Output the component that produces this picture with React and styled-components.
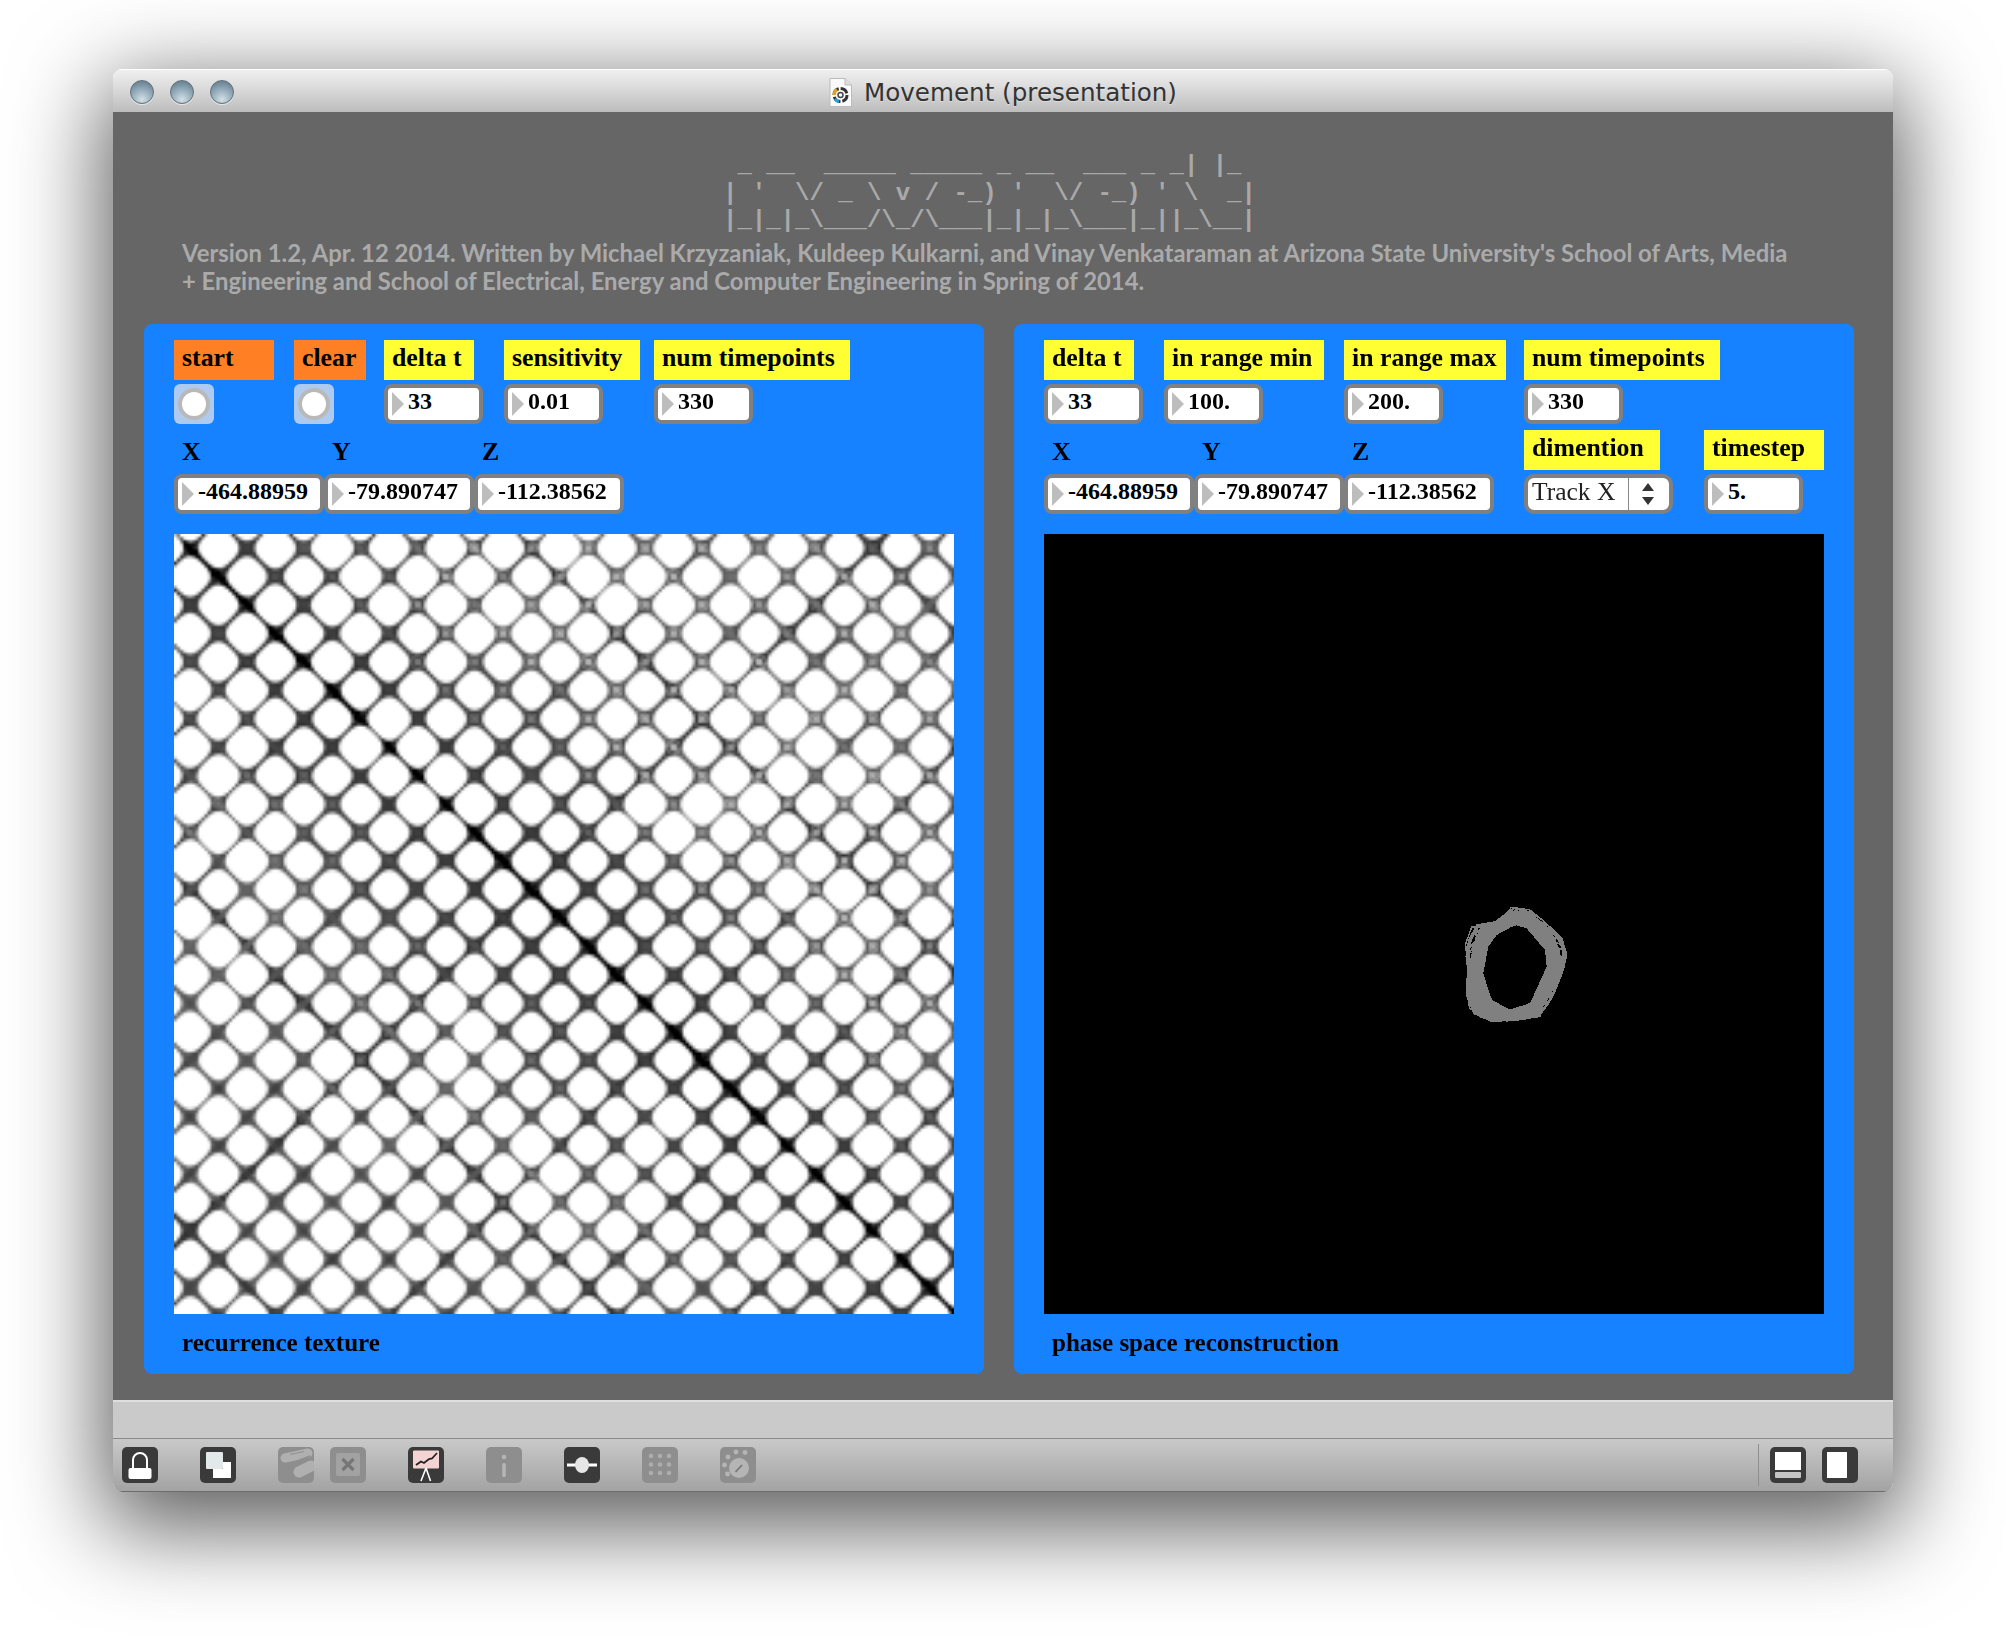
import React, { useEffect, useRef } from 'react';
import styled, { createGlobalStyle } from 'styled-components';

const GlobalStyle = createGlobalStyle`
  html, body { margin: 0; padding: 0; background: #fff; }
  body { overflow: hidden; }
`;

const Desktop = styled.div`
  width: 2006px;
  height: 1650px;
  padding: 69px 113px 0;
  box-sizing: border-box;
`;

const Window = styled.div`
  width: 1780px;
  height: 1423px;
  display: flex;
  flex-direction: column;
  border-radius: 9px;
  overflow: hidden;
`;

const WindowShadow = styled.div`
  width: 1780px;
  height: 1423px;
  border-radius: 9px;
  box-shadow: 0 26px 90px 10px rgba(0, 0, 0, 0.64);
`;

const TitleBar = styled.div`
  position: relative;
  height: 43px;
  flex: none;
  display: flex;
  align-items: center;
  justify-content: center;
  gap: 12px;
  padding-top: 3px;
  box-sizing: border-box;
  background: linear-gradient(#f0f0f0, #e2e2e2 30%, #bdbdbd);
  box-shadow: inset 0 1px 0 #fff;
`;

const Lights = styled.div`
  position: absolute;
  left: 17px;
  top: 11px;
  display: flex;
  gap: 16px;
`;

const Light = styled.span`
  width: 24px;
  height: 24px;
  border-radius: 50%;
  box-sizing: border-box;
  border: 1px solid #5f6f7a;
  background: radial-gradient(circle at 50% 85%, #d3e0e6 0, #97afbd 45%, #6f8797 80%);
  box-shadow: 0 1px 0 rgba(255, 255, 255, 0.6);
`;

const TitleText = styled.span`
  font-family: "DejaVu Sans", sans-serif;
  font-size: 24.6px;
  color: #333;
  text-shadow: 0 1px 0 rgba(255, 255, 255, 0.4);
`;

const Body = styled.div`
  flex: none;
  height: 1288px;
  box-sizing: border-box;
  background: #666;
  padding: 40px 39px 0 31px;
`;

const AsciiLogo = styled.pre`
  margin: 0 0 0 579px;
  height: 87px;
  font-family: "Liberation Mono", monospace;
  font-weight: 700;
  font-size: 24px;
  line-height: 27.5px;
  color: #a9a9a9;
`;

const Blurb = styled.p`
  margin: 0 0 0 38px;
  font-family: Lato, sans-serif;
  font-weight: 700;
  font-size: 23.85px;
  line-height: 28px;
  color: #aaa;
  white-space: nowrap;
`;

const Panels = styled.div`
  display: flex;
  gap: 30px;
  margin-top: 29px;
`;

const Panel = styled.section`
  width: 840px;
  height: 1050px;
  box-sizing: border-box;
  padding: 16px 30px 0;
  border-radius: 8px;
  background: #1782ff;
`;

const Row = styled.div`
  display: flex;
  height: 84px;
  margin-bottom: 6px;
`;

const Field = styled.div`
  width: ${(p) => p.$w}px;
  flex: none;
  display: flex;
  flex-direction: column;
  gap: 4px;
`;

const Label = styled.div`
  align-self: flex-start;
  box-sizing: border-box;
  width: ${(p) => (p.$w ? `${p.$w}px` : 'auto')};
  height: 40px;
  padding-left: 8px;
  line-height: ${(p) => (p.$bg ? 36 : 43)}px;
  font-family: "Liberation Serif", serif;
  font-weight: 700;
  font-size: 25.8px;
  white-space: nowrap;
  color: #000;
  background: ${(p) => p.$bg || 'transparent'};
`;

const Bang = styled.div`
  width: 40px;
  height: 40px;
  box-sizing: border-box;
  padding: 4px;
  border-radius: 6px;
  background: #afcaef;
`;

const BangRing = styled.div`
  height: 32px;
  box-sizing: border-box;
  border-radius: 50%;
  border: 4px solid #b9b9b9;
  background: #fff;
`;

const NumBox = styled.div`
  position: relative;
  width: ${(p) => p.$w}px;
  height: 40px;
  box-sizing: border-box;
  border: 4px solid #808080;
  border-radius: 8px;
  background: #fff;
  padding-left: 20px;
  font-family: "Liberation Serif", serif;
  font-weight: 700;
  font-size: 24px;
  line-height: 27px;
  color: #000;
  &::before {
    content: '';
    position: absolute;
    left: 4px;
    top: 4px;
    border-left: 12px solid #bdbdbd;
    border-top: 12px solid transparent;
    border-bottom: 12px solid transparent;
  }
`;

const SelectBox = styled.div`
  position: relative;
  width: 149px;
  height: 40px;
  box-sizing: border-box;
  border: 4px solid #808080;
  border-radius: 10px;
  background: #fff;
  padding-left: 4px;
  font-family: "Liberation Serif", serif;
  font-size: 25.5px;
  line-height: 27px;
  color: #222;
`;

const SelectArrows = styled.svg`
  position: absolute;
  right: 0;
  top: 0;
  width: 41px;
  height: 32px;
`;

const Picture = styled.canvas`
  display: block;
  width: 780px;
  height: 780px;
  margin-top: 20px;
`;

const Scope = styled.svg`
  display: block;
  width: 780px;
  height: 780px;
  margin-top: 20px;
  background: #000;
`;

const Caption = styled(Label)`
  margin-top: 8px;
  font-size: 25px;
  line-height: 41px;
`;

const StatusBar = styled.div`
  flex: none;
  height: 39px;
  box-sizing: border-box;
  background: #cacaca;
  border-top: 2px solid #dedede;
  border-bottom: 1px solid #8a8a8a;
`;

const ToolBar = styled.div`
  flex: none;
  height: 53px;
  box-sizing: border-box;
  padding: 8px 35px 0 9px;
  display: flex;
  justify-content: space-between;
  background: linear-gradient(#c9c9c9, #a3a3a3);
  border-bottom: 1px solid #6d6d6d;
`;

const ToolGroup = styled.div`
  display: flex;
  gap: ${(p) => p.$gap}px;
`;

const ToolSep = styled.div`
  width: 1px;
  height: 42px;
  margin: -3px -5px 0 0;
  background: #8f8f8f;
`;

const ToolIcon = styled.svg`
  width: 36px;
  height: 36px;
  flex: none;
  border-radius: 5px;
  background: ${(p) => (p.$off ? '#8e8e8e' : '#3a3a3a')};
`;

const ART = String.raw` _ __  _____ _____ _ __  ___ _ _| |_ 
| '  \/ _ \ v / -_) '  \/ -_) ' \  _|
|_|_|_\___/\_/\___|_|_|_\___|_||_\__|`;

const hash = (a, b) => Math.abs(Math.sin(a * 12.9898 + b * 78.233) * 43758.5453) % 1;
const smooth = (lo, hi, x) => {
  const t = Math.min(1, Math.max(0, (x - lo) / (hi - lo)));
  return t * t * (3 - 2 * t);
};

// recurrence plot: round white cells in a diagonal lattice, the main diagonal darkest
function paintTexture(canvas) {
  const n = 256;
  const P = 56.9;
  canvas.width = n;
  canvas.height = n;
  const ctx = canvas.getContext('2d');
  const img = ctx.createImageData(n, n);
  for (let py = 0; py < n; py++) {
    for (let px = 0; px < n; px++) {
      const x = ((px + 0.5) * 780) / n;
      const y = ((py + 0.5) * 780) / n;
      const u = (x - y - 2) / P;
      const v = (x + y - 30) / P;
      const U = u - Math.floor(u) - 0.5;
      const V = v - Math.floor(v) - 0.5;
      const aU = Math.abs(U);
      const aV = Math.abs(V);
      const r = Math.pow(Math.pow(aU, 3) + Math.pow(aV, 3), 1 / 3);
      const i = Math.abs(Math.round(u));
      const j = Math.round(v);
      // every cell gets its own size, kept symmetric around the main diagonal
      const cell = hash(Math.abs(Math.floor(u) + 0.5), Math.floor(v));
      const R = 0.385 + 0.05 * cell;
      const edgeKey = aU > aV ? hash(i, 3.1) : hash(j, 7.7);
      const far = Math.min(1, i / 5);
      let edge = 0.82 - 0.22 * edgeKey * far;
      if (aU > aV && i === 0) edge = 1;
      const nodeKey = hash(i, j);
      const pale = far * (0.45 + 0.35 * Math.sin((x - y + 200) / 300));
      const node = i === 0 ? 1 : Math.max(0.3, 0.82 - pale * (0.35 + 0.6 * nodeKey));
      const dark = smooth(R, R + 0.1, r) * (edge + (node - edge) * smooth(0.5, 0.6, r));
      const c = Math.round(255 * (1 - dark));
      const k = (py * n + px) * 4;
      img.data[k] = c;
      img.data[k + 1] = c;
      img.data[k + 2] = c;
      img.data[k + 3] = 255;
    }
  }
  ctx.putImageData(img, 0, 0);
}

function RecurrenceTexture() {
  const ref = useRef(null);
  useEffect(() => {
    paintTexture(ref.current);
  }, []);
  return <Picture ref={ref} />;
}

// loop outline read off the screenshot (3x crop coords), moved into the scope's own space
const toScope = ([x, y]) => [x / 3 + 386, y / 3 + 356];
const OUTER = [[255, 38], [335, 70], [345, 95], [390, 120], [418, 180], [400, 260], [370, 330], [330, 385], [250, 395], [150, 400], [105, 345], [110, 220], [95, 185], [125, 100], [200, 90]].map(toScope);
const INNER = [[255, 105], [290, 115], [345, 180], [350, 230], [300, 340], [240, 358], [185, 330], [160, 250], [175, 170], [200, 135]].map(toScope);
const CENTER = toScope([255, 230]);

// radial reach of a polygon in a given direction from the hole's centre
function reach(poly, angle) {
  const dx = Math.cos(angle);
  const dy = Math.sin(angle);
  let best = 0;
  poly.forEach((a, i) => {
    const b = poly[(i + 1) % poly.length];
    const ax = a[0] - CENTER[0];
    const ay = a[1] - CENTER[1];
    const ex = b[0] - a[0];
    const ey = b[1] - a[1];
    const det = dx * ey - dy * ex;
    if (Math.abs(det) < 1e-6) return;
    const t = (ax * ey - ay * ex) / det;
    const s = (ax * dy - ay * dx) / det;
    if (t > 0 && s >= 0 && s <= 1) best = t;
  });
  return best;
}

const TRACES = [];
for (let k = 0; k < 40; k++) {
  const steps = 20;
  const start = hash(k, 1.3) * 6.28;
  const p = [];
  for (let s = 0; s < steps; s++) {
    const ang = start + (s * 6.283) / steps;
    const lo = reach(INNER, ang) + 2;
    const hi = reach(OUTER, ang) - 1;
    const f = Math.pow(hash(k, Math.floor(s / 3) + 0.37), 1.1);
    const len = lo + (hi - lo) * f;
    p.push(`${(CENTER[0] + Math.cos(ang) * len).toFixed(1)} ${(CENTER[1] + Math.sin(ang) * len).toFixed(1)}`);
  }
  TRACES.push('M' + p.join('L') + 'Z');
}

function ringPath(list) {
  return 'M' + list.map((q) => q.join(' ')).join('L') + 'Z';
}

// the thick band right around the hole: its outer rim sits halfway out
const BAND = [];
for (let s = 0; s < 40; s++) {
  const ang = (s * 6.283) / 40;
  const lo = reach(INNER, ang);
  const hi = reach(OUTER, ang);
  const len = lo + (hi - lo) * 0.62;
  BAND.push([CENTER[0] + Math.cos(ang) * len, CENTER[1] + Math.sin(ang) * len]);
}

function PhaseLoop() {
  return (
    <Scope viewBox="0 0 780 780" shapeRendering="crispEdges">
      <path d={ringPath(BAND) + ringPath(INNER)} fill="#808080" fillRule="evenodd" />
      {TRACES.map((d, i) => (
        <path key={i} d={d} fill="none" stroke="#808080" strokeWidth="1.5" />
      ))}
    </Scope>
  );
}

function Num({ w, children }) {
  return <NumBox $w={w}>{children}</NumBox>;
}

const YELLOW = '#ffff33';
const ORANGE = '#ff7f24';

function DocIcon() {
  return (
    <svg width="23" height="29" viewBox="0 0 23 29">
      <path d="M1 .5h15l6.5 6.5v21.5H1z" fill="#fafafa" stroke="#bbb" />
      <path d="M16 .5v6.5h6.5" fill="#ddd" stroke="#bbb" />
      <circle cx="11.5" cy="17" r="6.5" fill="none" stroke="#333" strokeWidth="3" strokeDasharray="8 2" />
      <path d="M5 17a6.5 6.5 0 0 1 3-5.5" fill="none" stroke="#e8a21c" strokeWidth="3" />
      <path d="M6 21a6.5 6.5 0 0 0 4 2.4" fill="none" stroke="#2e9fd8" strokeWidth="3" />
      <circle cx="11.5" cy="17" r="2.5" fill="none" stroke="#444" strokeWidth="1.5" />
    </svg>
  );
}

function LockIcon() {
  return (
    <ToolIcon viewBox="0 0 36 36">
      <path d="M11 21v-8a7 7 0 0 1 14 0v8" fill="none" stroke="#fff" strokeWidth="2" />
      <rect x="6.5" y="21" width="23" height="11" rx="2" fill="#fff" />
    </ToolIcon>
  );
}

function CopyIcon() {
  return (
    <ToolIcon viewBox="0 0 36 36">
      <rect x="6" y="5" width="17" height="17" rx="1" fill="#e3e9e9" />
      <path d="M23 15h8v16H13v-9h10z" fill="#fff" />
    </ToolIcon>
  );
}

function BinocularIcon() {
  return (
    <ToolIcon $off viewBox="0 0 36 36">
      <g stroke="#b0b0b0" strokeLinecap="round">
        <path d="M7 11L30 6" strokeWidth="9" />
        <path d="M21 25L33 19" strokeWidth="11" />
      </g>
      <path d="M12 7.5l14-3" stroke="#8e8e8e" strokeWidth="1" />
      <path d="M17 15l15-6" stroke="#8e8e8e" strokeWidth="1.5" />
    </ToolIcon>
  );
}

function DeleteIcon() {
  return (
    <ToolIcon $off viewBox="0 0 36 36">
      <rect x="6" y="6" width="24" height="23" rx="2" fill="#a2a2a2" />
      <path d="M12.5 12l11 11M23.5 12l-11 11" stroke="#767676" strokeWidth="3.2" />
    </ToolIcon>
  );
}

function PresentIcon() {
  return (
    <ToolIcon viewBox="0 0 36 36">
      <rect x="5" y="3.5" width="26" height="18" rx="1" fill="#f3d4d2" />
      <path d="M8 18l5-3.5 3 1.5 5-4 3-.5 5-5.5" fill="none" stroke="#222" strokeWidth="1.8" />
      <path d="M18 21l-5 13M18 21l4.5 13" stroke="#fff" strokeWidth="1.6" />
    </ToolIcon>
  );
}

function InfoIcon() {
  return (
    <ToolIcon $off viewBox="0 0 36 36">
      <circle cx="18" cy="10" r="2.3" fill="#b5b5b5" />
      <rect x="16.2" y="16" width="3.6" height="14" rx="1.5" fill="#b5b5b5" />
    </ToolIcon>
  );
}

function SliderIcon() {
  return (
    <ToolIcon viewBox="0 0 36 36">
      <rect x="3" y="16.5" width="30" height="3" fill="#fff" />
      <ellipse cx="18" cy="18" rx="7" ry="8" fill="#e6e6e6" />
    </ToolIcon>
  );
}

function GridIcon() {
  const dots = [];
  for (let r = 0; r < 3; r++) {
    for (let c = 0; c < 3; c++) {
      dots.push(<circle key={`${r}${c}`} cx={9 + c * 9} cy={9 + r * 8.5} r="2.3" fill="#adadad" />);
    }
  }
  return (
    <ToolIcon $off viewBox="0 0 36 36">
      {dots}
    </ToolIcon>
  );
}

function DialIcon() {
  return (
    <ToolIcon $off viewBox="0 0 36 36">
      <circle cx="19" cy="21" r="10" fill="#b5b5b5" />
      <path d="M15.5 25l6.5-7" stroke="#777" strokeWidth="1.8" />
      {[[16, 5], [25, 5.5], [8, 10], [4.5, 18], [7.5, 27]].map(([x, y], i) => (
        <circle key={i} cx={x} cy={y} r="2.4" fill="#b5b5b5" />
      ))}
    </ToolIcon>
  );
}

function SplitBottomIcon() {
  return (
    <ToolIcon viewBox="0 0 36 36">
      <rect x="5" y="5" width="26" height="18" fill="#fff" />
      <rect x="5" y="25" width="26" height="6" rx="1" fill="#c4c4c4" />
    </ToolIcon>
  );
}

function SplitSideIcon() {
  return (
    <ToolIcon viewBox="0 0 36 36">
      <rect x="5" y="5" width="20" height="26" fill="#fff" />
    </ToolIcon>
  );
}

export default function App() {
  return (
    <Desktop>
      <GlobalStyle />
      <WindowShadow>
        <Window>
          <TitleBar>
            <Lights>
              <Light />
              <Light />
              <Light />
            </Lights>
            <DocIcon />
            <TitleText>Movement (presentation)</TitleText>
          </TitleBar>
          <Body>
            <AsciiLogo>{ART}</AsciiLogo>
            <Blurb>
              Version 1.2, Apr. 12 2014. Written by Michael Krzyzaniak, Kuldeep Kulkarni, and Vinay Venkataraman at Arizona State University's School of Arts, Media
              <br />
              + Engineering and School of Electrical, Energy and Computer Engineering in Spring of 2014.
            </Blurb>
            <Panels>
              <Panel>
                <Row>
                  <Field $w={120}>
                    <Label $bg={ORANGE} $w={100}>start</Label>
                    <Bang><BangRing /></Bang>
                  </Field>
                  <Field $w={90}>
                    <Label $bg={ORANGE} $w={72}>clear</Label>
                    <Bang><BangRing /></Bang>
                  </Field>
                  <Field $w={120}>
                    <Label $bg={YELLOW} $w={90}>delta t</Label>
                    <Num w={99}>33</Num>
                  </Field>
                  <Field $w={150}>
                    <Label $bg={YELLOW} $w={136}>sensitivity</Label>
                    <Num w={99}>0.01</Num>
                  </Field>
                  <Field $w={200}>
                    <Label $bg={YELLOW} $w={196}>num timepoints</Label>
                    <Num w={99}>330</Num>
                  </Field>
                </Row>
                <Row>
                  <Field $w={150}>
                    <Label>X</Label>
                    <Num w={150}>-464.88959</Num>
                  </Field>
                  <Field $w={150}>
                    <Label>Y</Label>
                    <Num w={150}>-79.890747</Num>
                  </Field>
                  <Field $w={150}>
                    <Label>Z</Label>
                    <Num w={150}>-112.38562</Num>
                  </Field>
                </Row>
                <RecurrenceTexture />
                <Caption>recurrence texture</Caption>
              </Panel>
              <Panel>
                <Row>
                  <Field $w={120}>
                    <Label $bg={YELLOW} $w={90}>delta t</Label>
                    <Num w={99}>33</Num>
                  </Field>
                  <Field $w={180}>
                    <Label $bg={YELLOW} $w={160}>in range min</Label>
                    <Num w={99}>100.</Num>
                  </Field>
                  <Field $w={180}>
                    <Label $bg={YELLOW} $w={162}>in range max</Label>
                    <Num w={99}>200.</Num>
                  </Field>
                  <Field $w={200}>
                    <Label $bg={YELLOW} $w={196}>num timepoints</Label>
                    <Num w={99}>330</Num>
                  </Field>
                </Row>
                <Row>
                  <Field $w={150}>
                    <Label>X</Label>
                    <Num w={150}>-464.88959</Num>
                  </Field>
                  <Field $w={150}>
                    <Label>Y</Label>
                    <Num w={150}>-79.890747</Num>
                  </Field>
                  <Field $w={180}>
                    <Label>Z</Label>
                    <Num w={150}>-112.38562</Num>
                  </Field>
                  <Field $w={180}>
                    <Label $bg={YELLOW} $w={136}>dimention</Label>
                    <SelectBox>
                      Track X
                      <SelectArrows viewBox="0 0 41 32">
                        <line x1="0.5" y1="0" x2="0.5" y2="32" stroke="#888" />
                        <path d="M20 5l-6 8h12zM20 27l-6-8h12z" fill="#333" />
                      </SelectArrows>
                    </SelectBox>
                  </Field>
                  <Field $w={120}>
                    <Label $bg={YELLOW} $w={120}>timestep</Label>
                    <Num w={99}>5.</Num>
                  </Field>
                </Row>
                <PhaseLoop />
                <Caption>phase space reconstruction</Caption>
              </Panel>
            </Panels>
          </Body>
          <StatusBar />
          <ToolBar>
            <ToolGroup $gap={42}>
              <LockIcon />
              <CopyIcon />
              <ToolGroup $gap={16}>
                <BinocularIcon />
                <DeleteIcon />
              </ToolGroup>
              <PresentIcon />
              <InfoIcon />
              <SliderIcon />
              <GridIcon />
              <DialIcon />
            </ToolGroup>
            <ToolGroup $gap={16}>
              <ToolSep />
              <SplitBottomIcon />
              <SplitSideIcon />
            </ToolGroup>
          </ToolBar>
        </Window>
      </WindowShadow>
    </Desktop>
  );
}
